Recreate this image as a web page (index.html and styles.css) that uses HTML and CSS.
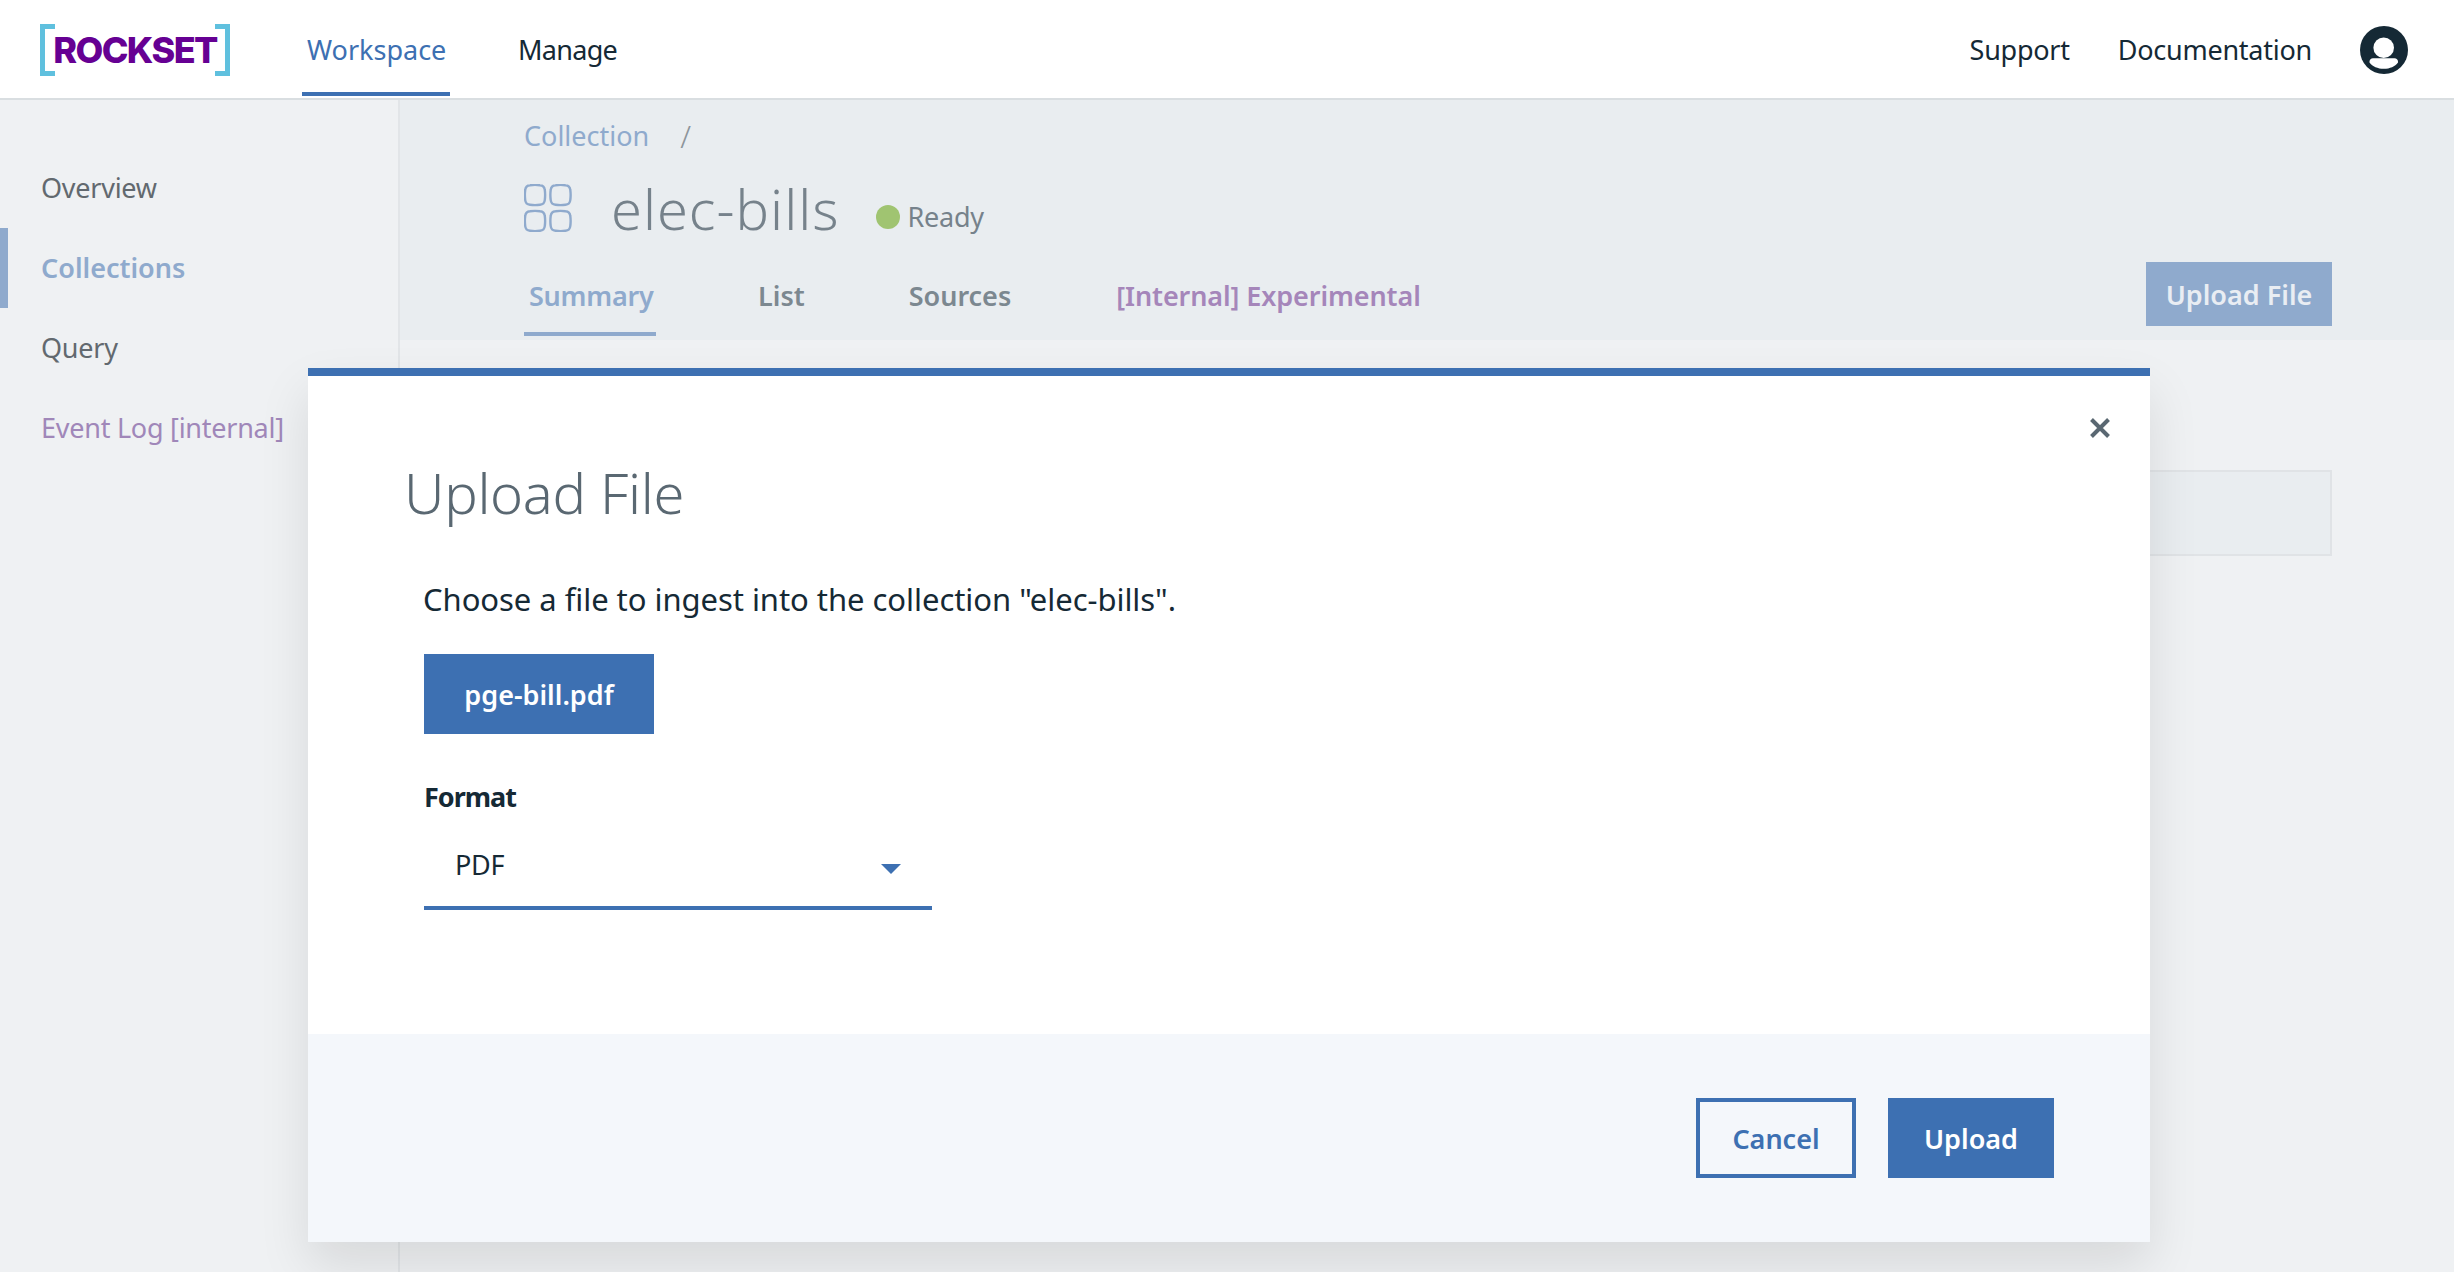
FILE: index.html
```html
<!DOCTYPE html>
<html lang="en">
<head>
<meta charset="utf-8">
<title>Upload File</title>
<link rel="stylesheet" href="styles.css">
</head>
<body>
<header class="topbar">
  <div class="logo"><span class="logo-text">ROCKSET</span></div>
  <nav class="topnav">
    <a class="topnav-item topnav-active">Workspace</a>
    <a class="topnav-item topnav-manage">Manage</a>
  </nav>
  <div class="toplinks">
    <a>Support</a>
    <a>Documentation</a>
    <svg class="avatar" viewBox="0 0 48 48"><circle cx="24" cy="24" r="24" fill="#152935"/><circle cx="23.700" cy="21.700" r="10.300" fill="#fff"/><path d="M9.500 35.500c0-2 1.500-3.300 3.500-3.300h21.500c2 0 3.500 1.300 3.500 3.300v1c-3 4-8 6.300-14.200 6.300s-11.300-2.300-14.300-6.300z" fill="#fff"/></svg>
  </div>
</header>
<div class="shell">
  <aside class="sidebar">
    <a class="side-item">Overview</a>
    <a class="side-item side-active">Collections</a>
    <a class="side-item">Query</a>
    <a class="side-item side-internal">Event Log [internal]</a>
  </aside>
  <main class="main">
    <section class="head">
      <div class="head-left">
        <div class="crumbs"><span class="crumb">Collection</span><span class="slash">/</span></div>
        <div class="title-row">
          <svg class="coll-icon" viewBox="0 0 48 48" fill="none" stroke="#8faacd" stroke-width="2.400">
            <defs><path id="sq" d="M6 1.200C9 .8 13 .8 16 1.200 19 1.500 20.500 3 20.800 6 21.200 9 21.200 13 20.800 16 20.500 19 19 20.500 16 20.800 13 21.200 9 21.200 6 20.800 3 20.500 1.500 19 1.200 16 .8 13 .8 9 1.200 6 1.500 3 3 1.500 6 1.200z"/></defs>
            <use href="#sq"/><use href="#sq" x="25.500"/><use href="#sq" y="26"/><use href="#sq" x="25.500" y="26"/>
          </svg>
          <h1 class="coll-name">elec-bills</h1>
          <span class="dot"></span>
          <span class="status">Ready</span>
        </div>
        <div class="tabs">
          <a class="tab tab-active">Summary</a>
          <a class="tab tab-list">List</a>
          <a class="tab tab-sources">Sources</a>
          <a class="tab tab-internal">[Internal] Experimental</a>
        </div>
      </div>
      <a class="head-btn">Upload File</a>
    </section>
    <section class="content"><div class="card"></div></section>
  </main>
</div>
<div class="modal">
  <div class="modal-body">
    <svg class="close" viewBox="0 0 20 20"><path d="M1.500 1.500l17 17M18.500 1.500l-17 17" stroke="#5a6872" stroke-width="4" fill="none"/></svg>
    <h2 class="modal-title">Upload File</h2>
    <div class="modal-form">
      <p class="lead">Choose a file to ingest into the collection "elec-bills".</p>
      <a class="btn btn-file">pge-bill.pdf</a>
      <div class="label">Format</div>
      <div class="select"><span class="select-value">PDF</span><svg class="caret" viewBox="0 0 20 10"><path d="M0 0h20l-10 10z" fill="#3d70b2"/></svg></div>
    </div>
  </div>
  <div class="modal-foot">
    <a class="btn btn-ghost">Cancel</a>
    <a class="btn btn-primary">Upload</a>
  </div>
</div>
</body>
</html>
```
FILE: styles.css
```css
* { box-sizing: border-box; }
html, body { margin: 0; height: 100%; }
body {
  height: 1272px;
  overflow: hidden;
  display: flex;
  flex-direction: column;
  position: relative;
  font-family: "Noto Sans", "Liberation Sans", sans-serif;
  font-size: 27px;
  letter-spacing: -.25px;
  color: #152935;
  background: #eff1f3;
}
h1, h2, p { margin: 0; font: inherit; }

.topbar {
  height: 100px;
  flex: none;
  display: flex;
  background: #fff;
  border-bottom: 2px solid #d9dee1;
  padding-left: 40px;
  padding-right: 46px;
}
.logo {
  width: 190px;
  height: 52px;
  margin-top: 24px;
  display: flex;
  align-items: center;
  justify-content: center;
  background:
    linear-gradient(#5fc0de, #5fc0de) 0 0 / 15px 5px no-repeat,
    linear-gradient(#5fc0de, #5fc0de) 0 100% / 15px 5px no-repeat,
    linear-gradient(#5fc0de, #5fc0de) 0 0 / 5px 100% no-repeat,
    linear-gradient(#5fc0de, #5fc0de) 100% 0 / 15px 5px no-repeat,
    linear-gradient(#5fc0de, #5fc0de) 100% 100% / 15px 5px no-repeat,
    linear-gradient(#5fc0de, #5fc0de) 100% 0 / 5px 100% no-repeat;
}
.logo-text {
  font-family: "Inter", "Liberation Sans", sans-serif;
  font-weight: 800;
  font-size: 36px;
  line-height: 52px;
  color: #660093;
  letter-spacing: -1.600px;
}
.topnav { display: flex; margin-left: 72px; height: 96px; }
.topnav-item { line-height: 100px; padding: 0 5px; }
.topnav-active { width: 148px; color: #3d70b2; border-bottom: 4px solid #3d70b2; margin-right: 63px; letter-spacing: 0; }
.topnav-manage { letter-spacing: -.7px; }
.toplinks { margin-left: auto; display: flex; align-items: flex-start; line-height: 100px; gap: 48px; }
.avatar { width: 48px; height: 48px; margin-top: 26px; }

.shell { flex: 1; display: flex; min-height: 0; }
.sidebar {
  width: 400px;
  flex: none;
  padding-top: 48px;
  border-right: 2px solid #e2e5e8;
  background: #eff1f3;
}
.side-item { display: block; height: 80px; line-height: 80px; padding-left: 41px; color: #62696f; }
.side-active { color: #8faacd; font-weight: 600; letter-spacing: 0; box-shadow: inset 8px 0 0 #8faacd; }
.side-internal { color: #a087b9; }

.main { flex: 1; min-width: 0; display: flex; flex-direction: column; }
.head {
  height: 240px;
  flex: none;
  background: #e9edf0;
  padding: 18px 122px 0 124px;
  display: flex;
  justify-content: space-between;
}
.crumbs { display: flex; height: 36px; line-height: 36px; }
.crumb { color: #8faacd; letter-spacing: 0; }
.slash { margin-left: 31px; font-size: 31px; font-weight: 300; color: #8d959b; }
.title-row { display: flex; align-items: center; height: 48px; margin-top: 30px; }
.coll-icon { width: 48px; height: 48px; flex: none; }
.coll-name { font-size: 56px; font-weight: 300; letter-spacing: 1px; line-height: 46px; color: #76828b; margin-left: 39px; }
.dot { width: 24px; height: 24px; border-radius: 50%; background: #a0c471; margin-left: 36px; margin-top: 18px; }
.status { margin-left: 8px; color: #76828b; line-height: 48px; margin-top: 18px; }
.tabs { display: flex; height: 74px; margin-top: 30px; }
.tab { display: block; font-weight: 600; letter-spacing: 0; line-height: 68px; color: #7c8890; }
.tab-active { width: 132px; padding-left: 5px; border-bottom: 4px solid #8faacd; color: #8faacd; letter-spacing: -.25px; }
.tab-list { margin-left: 102px; }
.tab-sources { margin-left: 104px; }
.tab-internal { margin-left: 105px; letter-spacing: -.1px; color: #a586ba; }
.head-btn {
  width: 186px;
  height: 64px;
  margin-top: 144px;
  background: #8faacd;
  color: #e9edf3;
  font-weight: 600;
  letter-spacing: 0;
  line-height: 65px;
  text-align: center;
}
.content { flex: 1; padding: 130px 122px 0 124px; }
.card { height: 86px; background: #e9edf0; border: 2px solid #e0e3e6; }

.modal {
  position: absolute;
  left: 308px;
  top: 368px;
  width: 1842px;
  height: 874px;
  border-top: 8px solid #3d70b2;
  background: #fff;
  display: flex;
  flex-direction: column;
  box-shadow: 0 24px 48px rgba(0, 0, 0, .1);
}
.modal-body { flex: 1; padding: 78px 96px 0; position: relative; }
.close { position: absolute; right: 40px; top: 42px; width: 20px; height: 20px; }
.modal-title { font-size: 56px; font-weight: 300; letter-spacing: -.3px; line-height: 76px; color: #5a6872; }
.modal-form { padding-left: 20px; margin-top: 45px; }
.lead { font-size: 31px; letter-spacing: -.05px; line-height: 48px; text-indent: -1px; }
.btn { display: block; height: 80px; font-weight: 600; letter-spacing: 0; line-height: 82px; text-align: center; }
.btn-file { width: 230px; margin-top: 31px; background: #3d70b2; color: #fff; }
.label { font-weight: 700; letter-spacing: -1px; line-height: 40px; margin-top: 43px; }
.select {
  width: 508px;
  height: 80px;
  margin-top: 13px;
  border-bottom: 4px solid #3d70b2;
  padding: 0 32px;
  display: flex;
  align-items: center;
  justify-content: space-between;
}
.select-value { line-height: 60px; margin-top: -7px; margin-left: -1px; }
.caret { width: 20px; height: 10px; margin-right: -1px; margin-top: 2px; }
.modal-foot {
  height: 208px;
  flex: none;
  background: #f4f7fb;
  padding: 64px 96px 0 0;
  display: flex;
  justify-content: flex-end;
  gap: 32px;
}
.btn-ghost { width: 160px; border: 4px solid #3d70b2; color: #3d70b2; line-height: 74px; }
.btn-primary { width: 166px; background: #3d70b2; color: #fff; }
```
